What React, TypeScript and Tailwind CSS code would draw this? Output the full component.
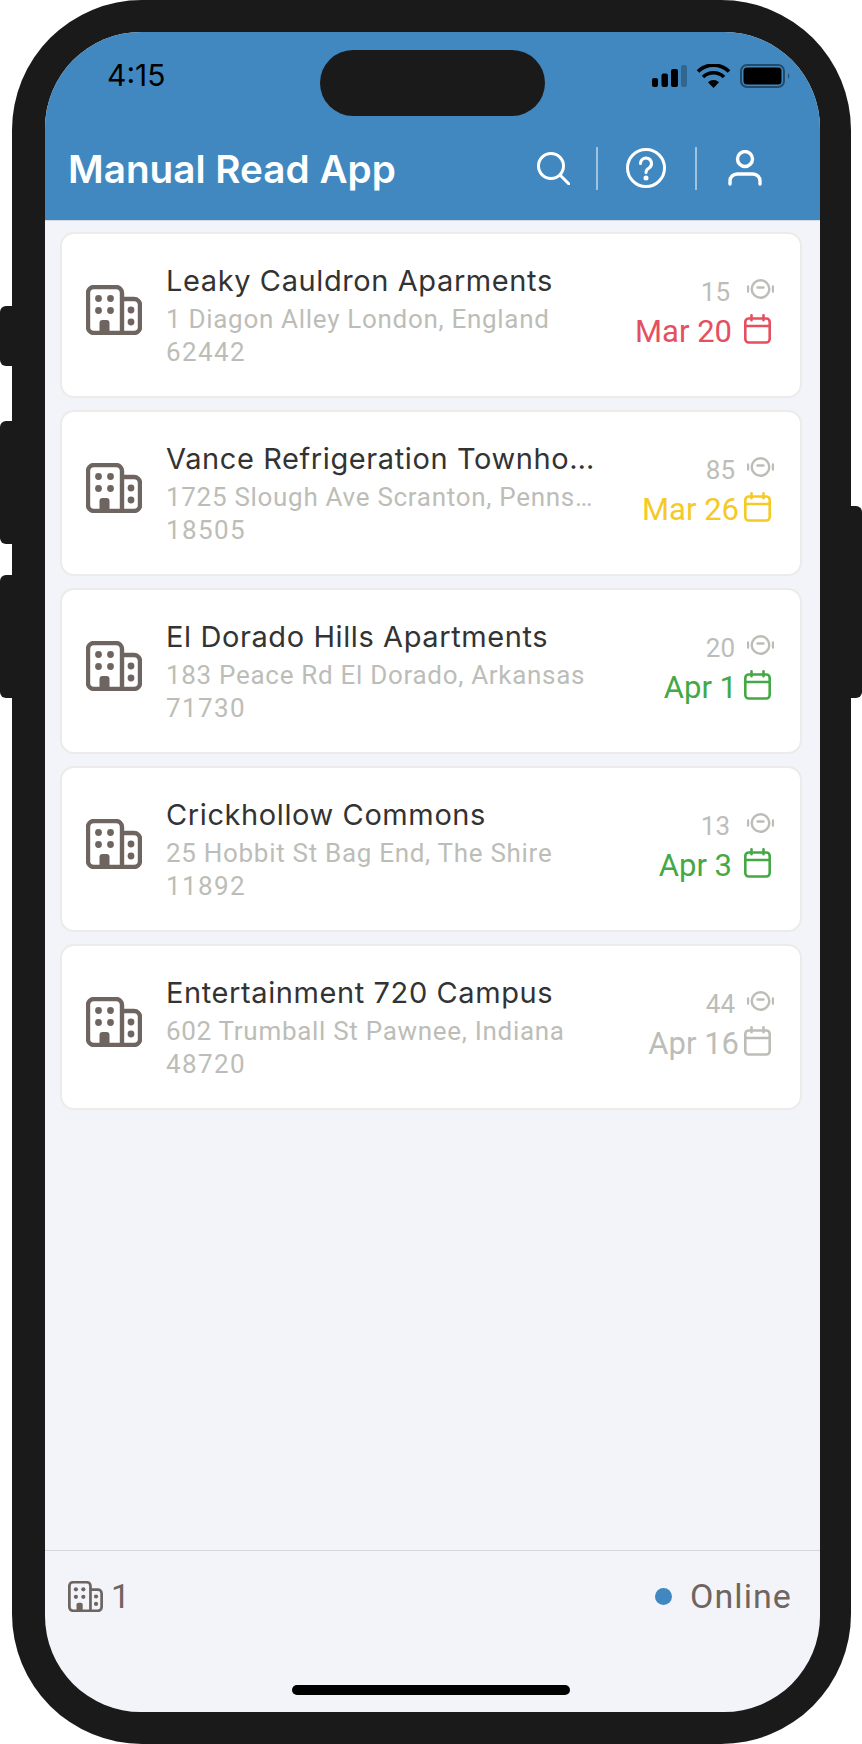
const sites = [
  { name: "Leaky Cauldron Aparments", addr: "1 Diagon Alley London, England", zip: "62442", count: "15", date: "Mar 20", dateColor: "text-[#e4505f]", countGap: "mr-[17px]", dateGap: "mr-[12px]" },
  { name: "Vance Refrigeration Townhomes", addr: "1725 Slough Ave Scranton, Pennsylvania", zip: "18505", count: "85", date: "Mar 26", dateColor: "text-[#f5c926]", countGap: "mr-[12px]", dateGap: "mr-[5px]" },
  { name: "El Dorado Hills Apartments", addr: "183 Peace Rd El Dorado, Arkansas", zip: "71730", count: "20", date: "Apr 1", dateColor: "text-[#45a845]", countGap: "mr-[12px]", dateGap: "mr-[7px]" },
  { name: "Crickhollow Commons", addr: "25 Hobbit St Bag End, The Shire", zip: "11892", count: "13", date: "Apr 3", dateColor: "text-[#45a845]", countGap: "mr-[17px]", dateGap: "mr-[12px]" },
  { name: "Entertainment 720 Campus", addr: "602 Trumball St Pawnee, Indiana", zip: "48720", count: "44", date: "Apr 16", dateColor: "text-[#bdbdb8]", countGap: "mr-[12px]", dateGap: "mr-[5px]" },
];

function BuildingIcon({ className }: { className: string }) {
  return (
    <svg viewBox="0 0 56 50" className={className} fill="none">
      <path d="M36 48H8a6 6 0 0 1-6-6V8a6 6 0 0 1 6-6h22a6 6 0 0 1 6 6v40zM36 14h12a6 6 0 0 1 6 6v22a6 6 0 0 1-6 6H36" stroke="#6f6560" strokeWidth="4.4" />
      <g fill="#6f6560">
        <circle cx="12.5" cy="13.5" r="3.4" />
        <circle cx="24.5" cy="13.5" r="3.4" />
        <circle cx="12.5" cy="25.5" r="3.4" />
        <circle cx="24.5" cy="25.5" r="3.4" />
        <circle cx="45" cy="25" r="3.4" />
        <circle cx="45" cy="37" r="3.4" />
        <path d="M13.5 48V38a3 3 0 0 1 3-3h4a3 3 0 0 1 3 3v10z" />
      </g>
    </svg>
  );
}

function MeterIcon() {
  return (
    <svg viewBox="0 0 27 20" className="h-[20px] w-[27px]" fill="none" stroke="#bdbdb8" strokeWidth="2.4" strokeLinecap="round">
      <circle cx="13.5" cy="10" r="8.800" />
      <path d="M10.5 8.500h6M1 7.500v5M26 7.500v5" />
    </svg>
  );
}

function CalendarIcon({ className }: { className: string }) {
  return (
    <svg viewBox="0 0 27 30" className={`h-[30px] w-[27px] ${className}`} fill="none" stroke="currentColor" strokeWidth="2.6" strokeLinecap="round">
      <rect x="1.300" y="4.500" width="24.400" height="24" rx="3.500" />
      <path d="M1.300 12h24.400M7.500 1.300v5M19.500 1.300v5" />
    </svg>
  );
}

function StatusIcons() {
  return (
    <svg viewBox="0 0 139 24" className="mt-[14px] h-[24px] w-[139px]">
      <rect x="0" y="14" width="6" height="9" rx="2" fill="#000" />
      <rect x="9.5" y="9.5" width="6.5" height="13.5" rx="2" fill="#000" />
      <rect x="19" y="5" width="7" height="18" rx="2" fill="#000" />
      <rect x="29" y="1" width="6" height="22" rx="2" fill="#000" fillOpacity="0.25" />
      <path d="M46 7.5a22 22 0 0 1 31 0" fill="none" stroke="#000" strokeWidth="3.6" />
      <path d="M51 13a15 15 0 0 1 21 0" fill="none" stroke="#000" strokeWidth="3.6" />
      <path d="M56 18.2a8 8 0 0 1 11 0L61.500 24z" fill="#000" />
      <rect x="89" y="1" width="43" height="22" rx="6" fill="none" stroke="#000" strokeOpacity="0.45" strokeWidth="2" />
      <rect x="91.500" y="3.500" width="38" height="17" rx="3.500" fill="#000" />
      <path d="M136 9a4 4 0 0 1 0 6z" fill="#000" fillOpacity="0.4" />
    </svg>
  );
}

function SiteCard({ site }: { site: (typeof sites)[number] }) {
  return (
    <div className="flex h-[166px] items-center rounded-[14px] border-2 border-[#ecebe9] bg-white">
      <BuildingIcon className="mb-[10px] ml-[24px] h-[50px] w-[56px] shrink-0" />
      <div className="ml-[24px] w-[446px] shrink-0 pb-[4px]">
        <div className="truncate font-['Inter',sans-serif] text-[29px] leading-[43px] tracking-[0.6px] text-[#333333]">{site.name}</div>
        <div className="w-[428px] truncate font-['Roboto',sans-serif] text-[26px] leading-[34px] tracking-[0.7px] text-[#bdbdb8]">{site.addr}</div>
        <div className="font-['Roboto',sans-serif] text-[26px] leading-[32px] tracking-[1.4px] text-[#bdbdb8]">{site.zip}</div>
      </div>
      <div className="mb-[6px] flex flex-1 flex-col items-end pr-[29px] font-['Roboto',sans-serif]">
        <div className="flex items-center">
          <span className={`${site.countGap} text-[26px] leading-[40px] text-[#bdbdb8]`}>{site.count}</span>
          <div className="-mr-[3px] mb-[6px]">
            <MeterIcon />
          </div>
        </div>
        <div className="flex items-center">
          <span className={`${site.dateGap} ${site.dateColor} text-[31px] leading-[40px]`}>{site.date}</span>
          <CalendarIcon className={`mb-[6px] ${site.dateColor}`} />
        </div>
      </div>
    </div>
  );
}

export default function App() {
  return (
    <div className="flex h-[1744px] w-[862px] bg-white">
      {/* side buttons */}
      <div className="flex w-[12px] flex-col pt-[306px]">
        <div className="h-[60px] rounded-l-[6px] bg-[#1a1a1a]" />
        <div className="mt-[55px] h-[123px] rounded-l-[6px] bg-[#1a1a1a]" />
        <div className="mt-[31px] h-[123px] rounded-l-[6px] bg-[#1a1a1a]" />
      </div>

      <div className="h-[1744px] w-[839px] rounded-[130px] bg-[#1a1a1a] pb-[32px] pl-[33px] pr-[31px] pt-[32px]">
        <div className="flex h-full flex-col overflow-hidden rounded-[96px] bg-[#f3f4f9]">
          <header className="h-[188px] shrink-0 bg-[#4088bf]">
            <div className="flex h-[84px] pt-[18px]">
              <div className="w-[275px] pl-[62px] font-['Inter',sans-serif] text-[30px] leading-[50px] text-black">4:15</div>
              <div className="h-[66px] w-[225px] rounded-[33px] bg-[#1a1a1a]" />
              <div className="ml-[107px]">
                <StatusIcons />
              </div>
            </div>
            <div className="flex h-[104px] items-center pl-[23px]">
              <div className="mt-[2px] w-[469px] font-['Inter',sans-serif] text-[38.7px] font-semibold text-white">Manual Read App</div>
              <svg viewBox="0 0 33 33" className="h-[33px] w-[33px]" fill="none" stroke="#fff" strokeWidth="3" strokeLinecap="round">
                <circle cx="14" cy="14" r="12.500" />
                <path d="M24 24l8 8" />
              </svg>
              <div className="ml-[26px] h-[43px] w-[2px] bg-white/50" />
              <svg viewBox="0 0 40 40" className="ml-[28px] h-[40px] w-[40px]" fill="none" stroke="#fff" strokeWidth="3" strokeLinecap="round">
                <circle cx="20" cy="20" r="18.500" />
                <path d="M14.500 15.500a5.500 5.500 0 1 1 8.500 4.600c-2 1.300-3 2.400-3 4.400" />
                <circle cx="20" cy="30" r="1" fill="#fff" />
              </svg>
              <div className="ml-[29px] h-[43px] w-[2px] bg-white/50" />
              <svg viewBox="0 0 34 36" className="ml-[31px] h-[36px] w-[34px]" fill="none" stroke="#fff" strokeWidth="3.400" strokeLinecap="round">
                <circle cx="17" cy="9" r="7.500" />
                <path d="M2 34v-3a7 7 0 0 1 7-7h16a7 7 0 0 1 7 7v3" />
              </svg>
            </div>
          </header>

          <main className="flex flex-1 flex-col gap-[12px] border-t border-[#d5dbe3] pl-[15px] pr-[18px] pt-[11px]">
            {sites.map((site) => (
              <SiteCard key={site.zip} site={site} />
            ))}
          </main>

          <footer className="flex h-[162px] shrink-0 flex-col border-t border-[#d5d5da] px-[23px]">
            <div className="flex h-[90px] items-center pr-[5px] font-['Roboto',sans-serif] text-[34px] text-[#6f6560]">
              <BuildingIcon className="h-[31px] w-[35px]" />
              <span className="ml-[8px]">1</span>
              <div className="ml-auto h-[17px] w-[17px] rounded-full bg-[#4088bf]" />
              <span className="ml-[18px] tracking-[1.1px]">Online</span>
            </div>
            <div className="ml-[224px] mt-[44px] h-[10px] w-[278px] rounded-full bg-black" />
          </footer>
        </div>
      </div>

      <div className="flex w-[11px] flex-col pt-[506px]">
        <div className="h-[192px] rounded-r-[6px] bg-[#1a1a1a]" />
      </div>
    </div>
  );
}
